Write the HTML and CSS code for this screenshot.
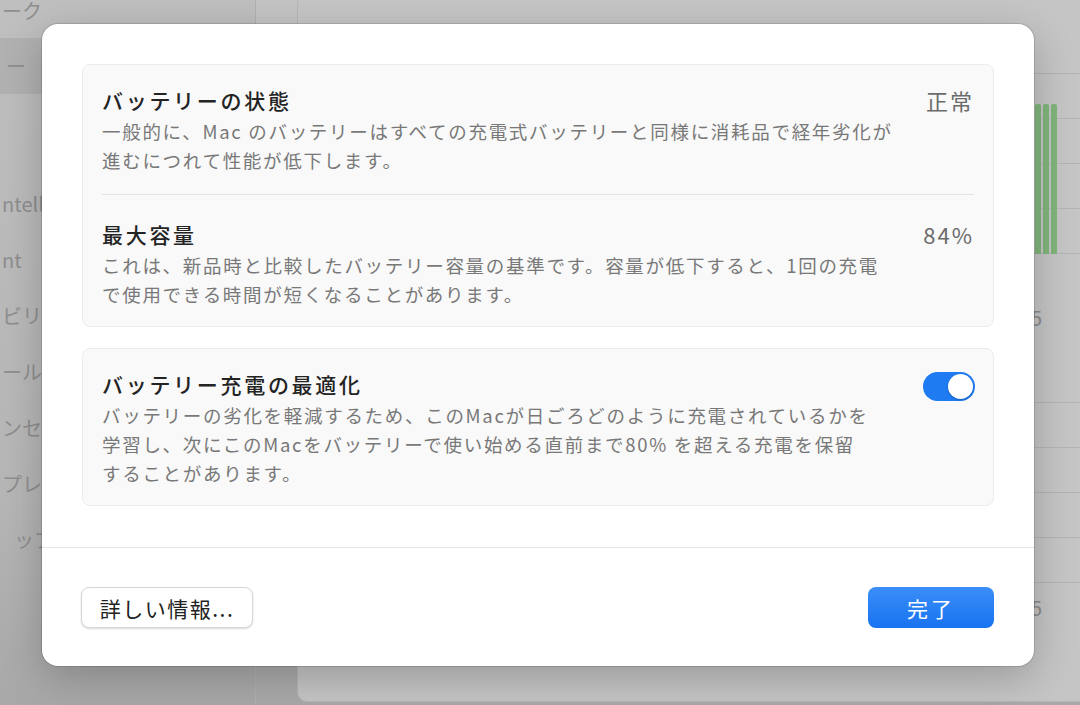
FILE: index.html
```html
<!DOCTYPE html>
<html lang="ja">

<head>
  <meta charset="UTF-8">
  <meta name="viewport" content="width=device-width, initial-scale=1.0">
  <title>バッテリーの状態</title>
  <link rel="stylesheet" href="styles.css">
</head>

<body>
  <!-- window behind the sheet (dimmed) -->
  <div class="window">
    <aside class="sidebar">
      <div class="side-item first">ーク</div>
      <div class="side-item active">ー</div>
      <div class="side-item"></div>
      <div class="side-item group-start">ntell</div>
      <div class="side-item">nt</div>
      <div class="side-item">ビリ</div>
      <div class="side-item">ール</div>
      <div class="side-item">ンセ</div>
      <div class="side-item">プレイ</div>
      <div class="side-item indent">ップ</div>
    </aside>

    <section class="content">
      <div class="panel">
        <div class="chart">
          <div class="grid-row"></div>
          <div class="grid-row"></div>
          <div class="grid-row"></div>
          <div class="grid-row"></div>
          <div class="bars">
            <span class="bar"></span>
            <span class="bar"></span>
            <span class="bar"></span>
          </div>
        </div>
        <div class="axis-label">5</div>

        <div class="chart second">
          <div class="grid-row"></div>
          <div class="grid-row"></div>
          <div class="grid-row"></div>
          <div class="grid-row"></div>
        </div>
        <div class="axis-label low">5</div>
      </div>
    </section>
  </div>

  <!-- battery sheet -->
  <div class="sheet">
    <div class="sheet-body">
      <div class="card">
        <div class="row">
          <div class="text">
            <div class="title">バッテリーの状態</div>
            <div class="desc">一般的に、Mac のバッテリーはすべての充電式バッテリーと同様に消耗品で経年劣化が<br>進むにつれて性能が低下します。</div>
          </div>
          <div class="value">正常</div>
        </div>
        <div class="row">
          <div class="text">
            <div class="title">最大容量</div>
            <div class="desc">これは、新品時と比較したバッテリー容量の基準です。容量が低下すると、1回の充電<br>で使用できる時間が短くなることがあります。</div>
          </div>
          <div class="value">84%</div>
        </div>
      </div>

      <div class="card">
        <div class="row">
          <div class="text">
            <div class="title">バッテリー充電の最適化</div>
            <div class="desc">バッテリーの劣化を軽減するため、このMacが日ごろどのように充電されているかを<br>学習し、次にこのMacをバッテリーで使い始める直前まで80% を超える充電を保留<br>することがあります。</div>
          </div>
          <div class="toggle on"></div>
        </div>
      </div>
    </div>

    <div class="sheet-footer">
      <button class="btn btn-secondary">詳しい情報...</button>
      <button class="btn btn-primary">完了</button>
    </div>
  </div>
</body>

</html>
```

FILE: styles.css
```css
body {
  margin: 0;
  width: 1080px;
  height: 705px;
  overflow: hidden;
  position: relative;
  font-family: "Noto Sans CJK JP", "Noto Sans", sans-serif;
  background-color: #c2c2c2;
}

/* ---- dimmed window behind ---- */

.window {
  display: flex;
  height: 705px;
  background: linear-gradient(#c4c4c4, #bcbcbc 60%, #a9a9a9);
}

.sidebar {
  width: 255px;
  flex-shrink: 0;
  background: linear-gradient(#bfbfbf, #b6b6b6 70%, #a8a8a8);
  border-right: 1px solid #b0b0b0;
}

.side-item {
  height: 56px;
  line-height: 56px;
  font-size: 20px;
  color: #8e8e8e;
  padding-left: 2px;
  white-space: nowrap;
}

.side-item.first {
  height: 22px;
  line-height: 22px;
  margin-bottom: 16px;
}

.side-item.active {
  background-color: #b1b1b1;
  padding-left: 6px;
}

.side-item.group-start {
  margin-top: 26px;
}

.side-item.indent {
  padding-left: 14px;
}

.content {
  flex: 1;
  padding-left: 41px;
}

.panel {
  width: 820px;
  height: 708px;
  margin-top: -6px;
  padding-top: 78px;
  box-sizing: border-box;
  background-color: #c5c5c5;
  border: 1px solid #b6b6b6;
  border-radius: 10px;
}

.chart {
  position: relative;
  border-top: 1px solid #b4b4b4;
}

.grid-row {
  height: 44px;
  border-bottom: 1px solid #b4b4b4;
}

.bars {
  position: absolute;
  left: 737px;
  top: 30px;
  bottom: 0;
  display: flex;
  gap: 2px;
}

.bar {
  width: 6px;
  background-color: #80b57c;
  border-radius: 2px 2px 0 0;
}

.axis-label {
  margin: 52px 0 0 733px;
  font-size: 20px;
  line-height: 24px;
  color: #8c8c8c;
}

.chart.second {
  margin-top: 72px;
}

.axis-label.low {
  margin-top: 13px;
}

/* ---- sheet ---- */

.sheet {
  position: absolute;
  left: 42px;
  top: 24px;
  width: 992px;
  background-color: #ffffff;
  border-radius: 16px;
  box-shadow: 0 0 0 1px rgba(0, 0, 0, 0.12), 0 12px 40px rgba(0, 0, 0, 0.22);
}

.sheet-body {
  display: flex;
  flex-direction: column;
  gap: 21px;
  padding: 40px 40px 41px;
}

.card {
  background-color: #f9f9f9;
  border: 1px solid #ececec;
  border-radius: 8px;
  padding: 0 19px;
}

.row {
  display: flex;
  justify-content: space-between;
  align-items: flex-start;
  gap: 20px;
  padding: 21px 0 19px;
}

.row:last-child {
  padding-bottom: 17px;
}

.row + .row {
  border-top: 1px solid #e4e4e4;
  padding-top: 25px;
}

.title {
  font-size: 21px;
  line-height: 28px;
  font-weight: 500;
  letter-spacing: 2.7px;
  color: #232323;
}

.desc {
  margin-top: 3px;
  font-size: 18.5px;
  line-height: 29px;
  letter-spacing: 1.7px;
  color: #787878;
  white-space: nowrap;
}

.value {
  font-size: 22px;
  line-height: 28px;
  letter-spacing: 2px;
  color: #6b6b6b;
  white-space: nowrap;
}

.toggle {
  position: relative;
  flex-shrink: 0;
  width: 52px;
  height: 29px;
  margin: 2px -1px 0 0;
  border-radius: 15px;
  background-color: #d4d4d4;
}

.toggle.on {
  background-color: #1f7bf2;
}

.toggle::after {
  content: "";
  position: absolute;
  top: 2px;
  left: 2px;
  width: 25px;
  height: 25px;
  border-radius: 50%;
  background-color: #ffffff;
  box-shadow: 0 1px 2px rgba(0, 0, 0, 0.25);
}

.toggle.on::after {
  left: auto;
  right: 2px;
}

.sheet-footer {
  display: flex;
  justify-content: space-between;
  align-items: center;
  padding: 39px 40px 38px 39px;
  border-top: 1px solid #e4e4e4;
}

.btn {
  height: 41px;
  border-radius: 8px;
  font-family: inherit;
  font-size: 21px;
  letter-spacing: 1.5px;
  cursor: pointer;
}

.btn-secondary {
  width: 172px;
  background-color: #ffffff;
  border: 1px solid #d8d8d8;
  box-shadow: 0 1px 2px rgba(0, 0, 0, 0.15);
  color: #222222;
}

.btn-primary {
  width: 126px;
  border: none;
  background: linear-gradient(#3b8ef8, #1873f0);
  color: #ffffff;
  letter-spacing: 3px;
}
```
